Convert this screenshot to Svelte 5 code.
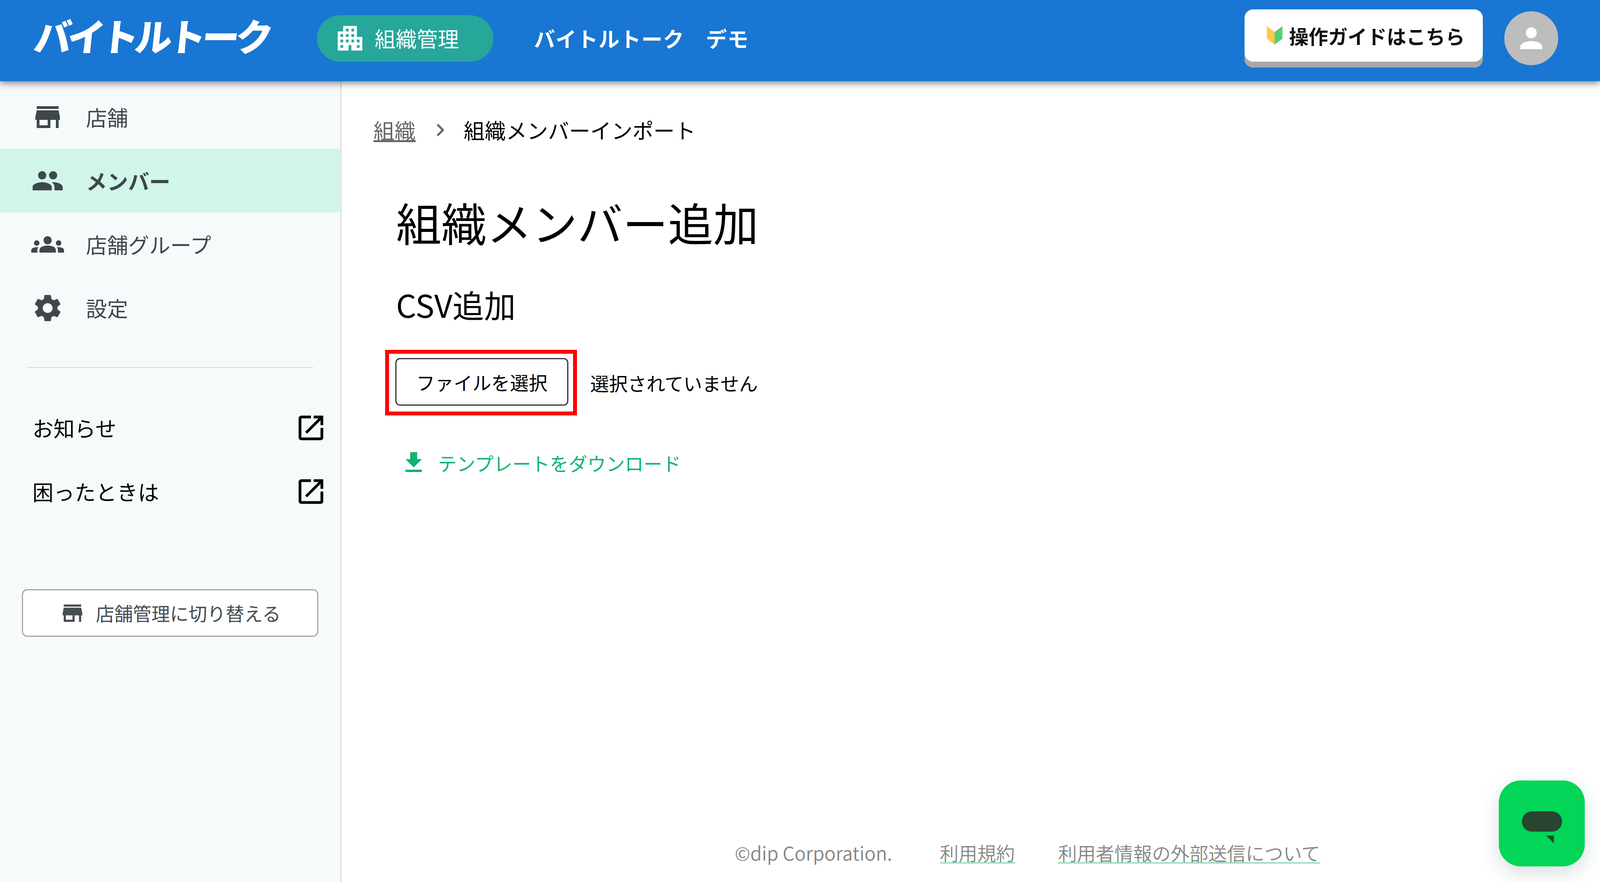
<script>
  const navItems = [
    { label: "店舗", icon: "store" },
    { label: "メンバー", icon: "people", active: true },
    { label: "店舗グループ", icon: "groups" },
    { label: "設定", icon: "settings" },
  ];
  const externalLinks = ["お知らせ", "困ったときは"];
  const icons = {
    store: "M20 4H4v2h16V4zm1 10v-2l-1-5H4l-1 5v2h1v6h10v-6h4v6h2v-6h1zm-9 4H6v-4h6v4z",
    people: "M16 11c1.66 0 2.99-1.34 2.99-3S17.66 5 16 5c-1.66 0-3 1.34-3 3s1.34 3 3 3zm-8 0c1.66 0 2.99-1.34 2.99-3S9.66 5 8 5C6.34 5 5 6.34 5 8s1.34 3 3 3zm0 2c-2.33 0-7 1.17-7 3.5V19h14v-2.5c0-2.33-4.67-3.5-7-3.5zm8 0c-.29 0-.62.02-.97.05 1.16.84 1.97 1.97 1.97 3.45V19h6v-2.5c0-2.33-4.67-3.5-7-3.5z",
    groups: "M12 12.75c1.63 0 3.07.39 4.24.9 1.08.48 1.76 1.56 1.76 2.73V18H6v-1.61c0-1.18.68-2.26 1.76-2.73 1.17-.52 2.61-.91 4.24-.91zM4 13c1.1 0 2-.9 2-2s-.9-2-2-2-2 .9-2 2 .9 2 2 2zm1.13 1.1c-.37-.06-.74-.1-1.13-.1-.99 0-1.93.21-2.78.58C.48 14.9 0 15.62 0 16.43V18h4.5v-1.61c0-.83.23-1.61.63-2.29zM20 13c1.1 0 2-.9 2-2s-.9-2-2-2-2 .9-2 2 .9 2 2 2zm4 3.43c0-.81-.48-1.53-1.22-1.85-.85-.37-1.79-.58-2.78-.58-.39 0-.76.04-1.13.1.4.68.63 1.46.63 2.29V18H24v-1.57zM12 6c1.66 0 3 1.34 3 3s-1.34 3-3 3-3-1.34-3-3 1.34-3 3-3z",
    settings: "M19.14 12.94c.04-.3.06-.61.06-.94 0-.32-.02-.64-.07-.94l2.03-1.58c.18-.14.23-.41.12-.61l-1.92-3.32c-.12-.22-.37-.29-.59-.22l-2.39.96c-.5-.38-1.03-.7-1.62-.94l-.36-2.54c-.04-.24-.24-.41-.48-.41h-3.84c-.24 0-.43.17-.47.41l-.36 2.54c-.59.24-1.13.57-1.62.94l-2.39-.96c-.22-.08-.47 0-.59.22L2.74 8.87c-.12.21-.08.47.12.61l2.03 1.58c-.05.3-.09.63-.09.94s.02.64.07.94l-2.03 1.58c-.18.14-.23.41-.12.61l1.92 3.32c.12.22.37.29.59.22l2.39-.96c.5.38 1.03.7 1.62.94l.36 2.54c.05.24.24.41.48.41h3.84c.24 0 .44-.17.47-.41l.36-2.54c.59-.24 1.13-.56 1.62-.94l2.39.96c.22.08.47 0 .59-.22l1.92-3.32c.12-.22.07-.47-.12-.61l-2.01-1.58zM12 15.6c-1.98 0-3.6-1.62-3.6-3.6s1.62-3.6 3.6-3.6 3.6 1.62 3.6 3.6-1.62 3.6-3.6 3.6z",
    open: "M19 19H5V5h7V3H5c-1.11 0-2 .9-2 2v14c0 1.1.89 2 2 2h14c1.1 0 2-.9 2-2v-7h-2v7zM14 3v2h3.59l-9.83 9.83 1.41 1.41L19 6.41V10h2V3h-7z",
    download: "M19 9h-4V3H9v6H5l7 7 7-7zM5 18v2h14v-2H5z",
    apartment: "M17 11V3H7v4H3v14h8v-4h2v4h8V11h-4zM7 19H5v-2h2v2zm0-4H5v-2h2v2zm0-4H5V9h2v2zm4 4H9v-2h2v2zm0-4H9V9h2v2zm0-4H9V5h2v2zm4 8h-2v-2h2v2zm0-4h-2V9h2v2zm0-4h-2V5h2v2zm4 12h-2v-2h2v2zm0-4h-2v-2h2v2z",
    chevron: "M10 6 8.59 7.41 13.17 12l-4.58 4.59L10 18l6-6z",
  };
</script>

{#snippet icon(name, cls)}
  <svg class={cls} viewBox="0 0 24 24" aria-hidden="true"><path d={icons[name]} /></svg>
{/snippet}

<div class="page">
  <header class="topbar">
    <span class="logo">バイトルトーク</span>
    <a class="scope" href="#org">
      {@render icon("apartment", "scope-icon")}
      <span>組織管理</span>
    </a>
    <span class="tenant">バイトルトーク　デモ</span>
    <button class="guide">
      <svg class="wakaba" viewBox="0 0 40 47" aria-hidden="true">
        <polygon points="0,0 20,15 20,47 0,32" fill="#ffc84d" />
        <polygon points="40,0 20,15 20,47 40,32" fill="#52cf78" />
      </svg>
      操作ガイドはこちら
    </button>
    <span class="avatar">
      <svg viewBox="0 0 24 24" aria-hidden="true">
        <path d="M12 12c2.21 0 4-1.79 4-4s-1.79-4-4-4-4 1.79-4 4 1.79 4 4 4zm0 2c-2.67 0-8 1.34-8 4v2h16v-2c0-2.66-5.33-4-8-4z" />
      </svg>
    </span>
  </header>

  <div class="body">
    <aside class="sidebar">
      <nav>
        {#each navItems as item}
          <a class="nav-row" class:active={item.active} href="#nav">
            {@render icon(item.icon, "nav-icon")}
            <span>{item.label}</span>
          </a>
        {/each}
      </nav>
      <hr class="divider" />
      {#each externalLinks as link}
        <a class="ext-row" href="#ext">
          <span>{link}</span>
          {@render icon("open", "nav-icon")}
        </a>
      {/each}
      <button class="switch">
        {@render icon("store", "switch-icon")}
        店舗管理に切り替える
      </button>
    </aside>

    <main class="main">
      <div class="breadcrumb">
        <a href="#org">組織</a>
        {@render icon("chevron", "crumb-sep")}
        <span>組織メンバーインポート</span>
      </div>

      <div class="content">
        <h1>組織メンバー追加</h1>
        <h2>CSV追加</h2>
        <div class="file-row">
          <span class="marked"><button class="file-btn">ファイルを選択</button></span>
          <span class="file-name">選択されていません</span>
        </div>
        <a class="template" href="#template">
          {@render icon("download", "template-icon")}
          テンプレートをダウンロード
        </a>
      </div>

      <footer class="footer">
        <span class="copy">©dip Corporation.</span>
        <a href="#terms">利用規約</a>
        <a href="#privacy">利用者情報の外部送信について</a>
      </footer>
    </main>
  </div>

  <button class="chat" aria-label="チャット">
    <svg viewBox="0 0 103 82" aria-hidden="true">
      <rect width="103" height="52" rx="26" fill="#28452f" />
      <polygon points="62,62 82,62 82,82" fill="#28452f" />
    </svg>
  </button>
</div>

<style>
  :global(body) {
    margin: 0;
    background: #fff;
    font-family: "Noto Sans CJK JP", "Noto Sans", sans-serif;
    color: #000;
  }

  a {
    color: inherit;
    text-decoration: none;
  }

  button {
    font-family: inherit;
    cursor: pointer;
  }

  svg {
    fill: currentColor;
    display: block;
    flex: none;
  }

  .page {
    position: relative;
    display: flex;
    flex-direction: column;
    height: 2259px;
    overflow: hidden;
  }

  .topbar {
    position: relative;
    z-index: 2;
    display: flex;
    align-items: center;
    flex: none;
    height: 196px;
    padding: 0 107px 12px 88px;
    background: #1976d2;
    color: #fff;
    box-shadow: 0 6px 16px rgba(0, 0, 0, 0.45);
  }

  .logo {
    display: inline-block;
    width: 607px;
    font-size: 96px;
    font-weight: 900;
    line-height: 100px;
    letter-spacing: -10px;
    white-space: nowrap;
    transform: translateY(-8px) skewX(-6deg);
  }

  .scope {
    display: flex;
    align-items: center;
    gap: 21px;
    width: 452px;
    height: 119px;
    box-sizing: border-box;
    margin-left: 116px;
    padding-left: 53px;
    border-radius: 60px;
    background: #27a69a;
    font-size: 54px;
    line-height: 1;
  }

  .scope-icon {
    width: 84px;
    height: 84px;
    margin-left: -10px;
  }

  .tenant {
    margin-left: 104px;
    font-size: 54px;
    font-weight: 700;
    line-height: 1;
    letter-spacing: 1px;
  }

  .guide {
    display: flex;
    align-items: center;
    flex: none;
    gap: 17px;
    margin-left: auto;
    width: 610px;
    height: 149px;
    box-sizing: border-box;
    padding: 0 0 15px 57px;
    border: 0;
    border-radius: 22px;
    background: #fff;
    box-shadow: inset 0 -15px 0 #a8a8a8;
    color: #111;
    font-size: 50px;
    font-weight: 700;
    line-height: 1;
  }

  .wakaba {
    width: 40px;
    height: 47px;
  }

  .avatar {
    display: flex;
    align-items: center;
    justify-content: center;
    flex: none;
    width: 138px;
    height: 138px;
    margin-left: 55px;
    border-radius: 50%;
    background: #bdbdbd;
  }

  .avatar svg {
    width: 84px;
    height: 84px;
  }

  .body {
    display: flex;
    flex: 1;
    min-height: 0;
  }

  .sidebar {
    flex: none;
    width: 871px;
    padding-top: 10px;
    background: #f7fafb;
    border-right: 4px solid #e2e4e6;
    color: #3d474d;
    font-size: 54px;
  }

  nav {
    display: flex;
    flex-direction: column;
  }

  .nav-row {
    display: flex;
    align-items: center;
    gap: 56px;
    height: 163px;
    padding-left: 80px;
  }

  .nav-row span {
    line-height: 1;
  }

  .nav-row.active {
    background: #d1f5e8;
    font-weight: 700;
  }

  .nav-icon {
    width: 84px;
    height: 84px;
  }

  .divider {
    height: 3px;
    margin: 70px 69px 71px 68px;
    border: 0;
    background: #e0e0e0;
  }

  .ext-row {
    display: flex;
    align-items: center;
    justify-content: space-between;
    height: 163px;
    padding: 0 33px 0 83px;
    color: #000;
  }

  .switch {
    display: flex;
    align-items: center;
    justify-content: center;
    gap: 26px;
    width: 759px;
    height: 122px;
    box-sizing: border-box;
    margin: 169px 0 0 56px;
    border: 3px solid #a6a6a6;
    border-radius: 14px;
    background: #fff;
    color: #444d52;
    font-size: 47.5px;
    line-height: 1;
  }

  .switch-icon {
    width: 67px;
    height: 67px;
  }

  .main {
    display: flex;
    flex: 1;
    flex-direction: column;
    min-width: 0;
    padding-left: 81px;
  }

  .breadcrumb {
    display: flex;
    align-items: center;
    gap: 38px;
    margin-top: 95px;
    height: 60px;
    font-size: 54px;
    line-height: 60px;
  }

  .breadcrumb a {
    color: #666;
    text-decoration: underline;
  }

  .crumb-sep {
    width: 64px;
    height: 64px;
    margin: 0 -10px 0 -7px;
    color: #666;
  }

  .content {
    padding-left: 56px;
  }

  h1 {
    margin: 139px 0 0 2px;
    font-size: 116px;
    font-weight: 400;
    line-height: 130px;
  }

  h2 {
    margin: 102px 0 0 2px;
    font-size: 81px;
    font-weight: 400;
    line-height: 90px;
  }

  .file-row {
    display: flex;
    align-items: center;
    margin-top: 72px;
    font-size: 48px;
  }

  .marked {
    display: block;
    margin-left: -26px;
    padding: 11px 12px 15px 16px;
    border: 10px solid #f00;
  }

  .file-btn {
    display: block;
    width: 443px;
    height: 122px;
    border: 3px solid #333;
    border-radius: 12px;
    background: #fff;
    color: #000;
    font-size: 48px;
    line-height: 1;
  }

  .file-name {
    margin-left: 34px;
  }

  .template {
    display: inline-flex;
    align-items: center;
    gap: 26px;
    margin: 85px 0 0 11px;
    color: #10b46e;
    font-size: 48px;
    line-height: 72px;
  }

  .template-icon {
    width: 72px;
    height: 72px;
  }

  .footer {
    display: flex;
    align-items: center;
    margin-top: auto;
    margin-bottom: 48px;
    padding-left: 925px;
    color: #858585;
    font-size: 48px;
    font-weight: 350;
    line-height: 56px;
  }

  .footer a {
    margin-left: 111px;
    text-decoration: underline;
    text-decoration-color: #9fdfc0;
    text-decoration-thickness: 4px;
    text-underline-offset: 4px;
  }

  .copy {
    margin-right: 11px;
  }

  .chat {
    position: absolute;
    right: 39px;
    bottom: 40px;
    display: flex;
    align-items: flex-start;
    justify-content: center;
    width: 220px;
    height: 220px;
    padding: 79px 0 0 0;
    border: 0;
    border-radius: 56px;
    background: #02d557;
    box-shadow: 0 16px 50px rgba(40, 70, 70, 0.18);
  }

  .chat svg {
    width: 103px;
    height: 82px;
  }
</style>
